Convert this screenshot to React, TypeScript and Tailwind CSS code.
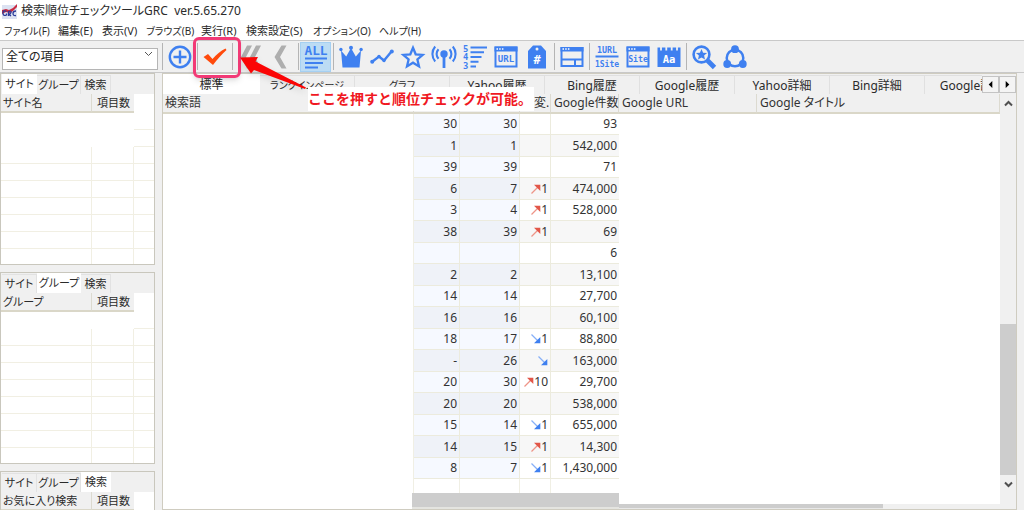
import React from 'react';

const BLUE = '#3f80f0';

const menus: [string, string][] = [
  ['ファイル(F)', 'w-[54px] text-[10px]'],
  ['編集(E)', 'w-[44px] text-[11px]'],
  ['表示(V)', 'w-[44px] text-[11px]'],
  ['ブラウズ(B)', 'w-[55px] text-[10px]'],
  ['実行(R)', 'w-[45px] text-[11px]'],
  ['検索設定(S)', 'w-[67px] text-[11px]'],
  ['オプション(O)', 'w-[66px] text-[10px]'],
  ['ヘルプ(H)', 'w-[60px] text-[10px]'],
];

function Icon({ children }: { children: React.ReactNode }) {
  return (
    <svg className="h-6 w-6 shrink-0 overflow-visible" viewBox="0 0 24 24" fill="none" stroke={BLUE} strokeWidth="2.4">
      {children}
    </svg>
  );
}

function Glyphs({ x, y, size, fill = BLUE, children }: { x: number; y: number; size: number; fill?: string; children: string }) {
  return (
    <text x={x} y={y} fontSize={size} fill={fill} stroke="none" fontWeight="700" textAnchor="middle" fontFamily="'DejaVu Sans Mono', 'Liberation Mono', monospace">
      {children}
    </text>
  );
}

function Tool({ label, active, children }: { label: string; active?: boolean; children: React.ReactNode }) {
  return (
    <button
      type="button"
      aria-label={label}
      className={active ? 'flex h-[30px] w-[31px] shrink-0 items-center justify-center border border-[#a5d0f2] bg-[#bcdcf4]' : 'flex h-[30px] w-[31px] shrink-0 items-center justify-center'}
    >
      <Icon>{children}</Icon>
    </button>
  );
}

function Sep() {
  return (
    <span className="flex w-1 shrink-0 justify-center self-stretch py-0.5">
      <span className="w-px bg-[#b4b4b4]" />
    </span>
  );
}

function Toolbar() {
  return (
    <div className="flex h-[33px] shrink-0 items-center border-y border-[#c9c9c9] bg-[#f0f0f0]">
      <div className="flex w-[160px] shrink-0 items-start self-stretch pt-0.5 pl-0.5">
        <div className="relative w-[156px]">
          <select aria-label="項目" className="h-[22px] w-full appearance-none border border-[#b5b5b5] bg-white pb-[3px] pl-[3px] text-xs leading-4 text-[#222]" defaultValue="all">
            <option value="all">全ての項目</option>
          </select>
          <svg className="pointer-events-none absolute top-[8px] right-[5px] h-[6px] w-[9px]" viewBox="0 0 9 6" fill="none" stroke="#555" strokeWidth="1">
            <path d="M1 1l3.5 3.5L8 1" />
          </svg>
        </div>
      </div>
      <Sep />
      <Tool label="追加">
        <circle cx="12" cy="12" r="10.2" />
        <path d="M12 5.5v13M5.5 12h13" />
      </Tool>
      <Sep />
      <Tool label="順位チェック">
        <path d="M.5 12l4.500-3 4.500 5C13.500 9.500 17.500 6 22.500 3.500l1 1.500C18.500 9.500 14 14.500 10 20z" fill="#ff4a0c" stroke="none" />
      </Tool>
      <Sep />
      <Tool label="最初へ">
        <path d="M9 .5h5L8 12l6 11.500H9L3 12zM18 .5h5L17 12l6 11.500h-5L12 12z" fill="#aeaeae" stroke="none" />
      </Tool>
      <Tool label="前へ">
        <path d="M12.500 .5h5L11 12l6.500 11.500h-5L5.500 12z" fill="#aeaeae" stroke="none" />
      </Tool>
      <Sep />
      <Tool label="全て" active>
        <Glyphs x={12} y={9.5} size={12.8}>ALL</Glyphs>
        <path d="M1 13.500h22M1 18h18M1 22.500h13" strokeWidth="1.900" />
      </Tool>
      <Sep />
      <Tool label="王冠">
        <path d="M2 5.500l5.200 6L12 3l4.800 8.500 5.200-6-1.500 17h-17z" fill={BLUE} stroke="none" />
        <circle cx="1.900" cy="4.500" r="1.700" fill={BLUE} stroke="none" />
        <circle cx="12" cy="2.800" r="2" fill={BLUE} stroke="none" />
        <circle cx="22.100" cy="4.500" r="1.700" fill={BLUE} stroke="none" />
      </Tool>
      <Tool label="推移">
        <path d="M2.500 16.500L9 11.500l5 4 7.500-9" />
        <circle cx="2.200" cy="16.800" r="2" fill={BLUE} stroke="none" />
        <circle cx="9" cy="11.500" r="1.700" fill={BLUE} stroke="none" />
        <circle cx="14" cy="15.500" r="1.700" fill={BLUE} stroke="none" />
        <circle cx="21.800" cy="6.500" r="2" fill={BLUE} stroke="none" />
      </Tool>
      <Tool label="お気に入り">
        <path d="M12 2.800l2.700 6.500 7 .6-5.300 4.600 1.600 6.900-6-3.700-6 3.700 1.600-6.900L2.300 9.900l7-.6z" strokeWidth="2.300" />
      </Tool>
      <Tool label="電波">
        <circle cx="12" cy="9" r="3.700" fill={BLUE} stroke="none" />
        <path d="M12 10v13" strokeWidth="2.800" />
        <path d="M6.500 4.200a7 7 0 0 0 0 9.600M17.500 4.200a7 7 0 0 1 0 9.600M3.200 1.500a11.500 11.500 0 0 0 0 15M20.800 1.500a11.500 11.500 0 0 1 0 15" strokeWidth="2.100" />
      </Tool>
      <Tool label="順位順">
        <Glyphs x={2.6} y={6.8} size={8.8}>5</Glyphs>
        <Glyphs x={2.6} y={15.3} size={8.8}>4</Glyphs>
        <Glyphs x={2.6} y={23.8} size={8.8}>3</Glyphs>
        <path d="M7.500 2.500H24M7.500 7.200h13.500M7.500 12h11M7.500 16.700h8M7.500 21.500h5.500" strokeWidth="2" />
      </Tool>
      <Tool label="URL">
        <path d="M1.500 2.500h21v19h-21z" strokeWidth="2" />
        <path d="M.5 1.500h23v5H.5z" fill={BLUE} stroke="none" />
        <path d="M2.500 4h7" stroke="#fff" strokeWidth="1.400" strokeDasharray="1.500 1.200" />
        <Glyphs x={12} y={16.8} size={9}>URL</Glyphs>
      </Tool>
      <Tool label="タグ">
        <path d="M8 .5h8l5 5.500v17.500H3V6z" fill={BLUE} stroke="none" />
        <circle cx="12" cy="4" r="1.500" fill="#f0f0f0" stroke="none" />
        <Glyphs x={12} y={19} size={12} fill="#fff">#</Glyphs>
      </Tool>
      <Sep />
      <Tool label="画面分割">
        <path d="M1.500 3h21v18h-21z" strokeWidth="2" />
        <path d="M.5 2h23v4.500H.5z" fill={BLUE} stroke="none" />
        <path d="M2.500 4h7" stroke="#fff" strokeWidth="1.400" strokeDasharray="1.500 1.200" />
        <path d="M1 14.500h22M15 14.500V21" strokeWidth="2" />
      </Tool>
      <Sep />
      <Tool label="1URL 1Site">
        <Glyphs x={12} y={7.6} size={8.4}>1URL</Glyphs>
        <path d="M.5 11.500h23" strokeWidth="2" />
        <Glyphs x={12} y={21.5} size={8}>1Site</Glyphs>
      </Tool>
      <Tool label="サイト">
        <path d="M1.500 2.500h21v19h-21z" strokeWidth="2" />
        <path d="M.5 1.500h23v5H.5z" fill={BLUE} stroke="none" />
        <path d="M2.500 4h7" stroke="#fff" strokeWidth="1.400" strokeDasharray="1.500 1.200" />
        <Glyphs x={12} y={16.8} size={8.2}>Site</Glyphs>
      </Tool>
      <Tool label="文字">
        <path d="M.5 2.500h23v19.500H.5z" fill={BLUE} stroke="none" />
        <path d="M4 1.500v4M9.300 1.500v4M14.700 1.500v4M20 1.500v4" stroke="#f0f0f0" strokeWidth="1.800" />
        <Glyphs x={12} y={17.5} size={10.5} fill="#fff">Aa</Glyphs>
      </Tool>
      <Sep />
      <Tool label="検索">
        <circle cx="9.500" cy="9.500" r="7.900" strokeWidth="2.600" />
        <path d="M15.500 15.500l7 7" strokeWidth="4.800" />
        <path d="M9.500 4l1.600 3.700 4 .3-3 2.600.9 3.900-3.500-2.100-3.500 2.100.9-3.900-3-2.600 4-.3z" fill={BLUE} stroke="none" />
      </Tool>
      <Tool label="共有">
        <circle cx="12" cy="13" r="8.300" strokeWidth="2.500" />
        <g fill={BLUE} stroke="none">
          <circle cx="12" cy="4.200" r="3.900" />
          <circle cx="4.200" cy="19" r="3.900" />
          <circle cx="19.800" cy="19" r="3.900" />
        </g>
      </Tool>
    </div>
  );
}

const sideTabs = [
  { label: 'サイト', width: 'w-[35px]' },
  { label: 'グループ', width: 'w-[44px]' },
  { label: '検索', width: 'w-[30px]' },
];

function SidePanel({ active, title, blankRows, rows }: { active: number; title: string; blankRows: number; rows: number }) {
  return (
    <section className="shrink-0 border border-[#c9c7bd] bg-white">
      <div role="tablist" className="flex h-[20px] items-end bg-[#f0f0f0] pl-px">
        {sideTabs.map((t, i) => (
          <button
            key={t.label}
            type="button"
            role="tab"
            aria-selected={i === active}
            className={`${t.width} shrink-0 whitespace-nowrap text-center text-[11px] leading-[18px] ${i === active ? 'h-[20px] bg-white' : 'h-[19px] border-t border-r border-[#e2e2e2] bg-[#f0f0f0]'}`}
          >
            {t.label}
          </button>
        ))}
      </div>
      <table className="w-full table-fixed border-separate border-spacing-0 text-[11px]">
        <colgroup>
          <col className="w-[91px]" />
          <col className="w-[42px]" />
          <col />
        </colgroup>
        <thead>
          <tr className="h-[19px] text-left leading-4">
            <th className="border-r border-b-2 border-r-[#dcdad0] border-b-[#dad7c8] bg-[#f0f0f0] pl-[2px] font-normal whitespace-nowrap">{title}</th>
            <th className="border-b-2 border-[#dad7c8] bg-[#f0f0f0] pl-[5px] font-normal whitespace-nowrap">項目数</th>
            <td />
          </tr>
        </thead>
        <tbody>
          {Array.from({ length: rows }, (_, i) => {
            const blank = i < blankRows;
            const last = i === rows - 1;
            const line = blank ? '' : last ? 'border-r border-[#f1efe3]' : 'border-r border-b border-[#f1efe3]';
            return (
              <tr key={i} className={last ? 'h-[15px]' : 'h-[17px]'}>
                <td className={line} />
                <td className={line} />
                <td className={last ? '' : 'border-b border-[#f1efe3]'} />
              </tr>
            );
          })}
        </tbody>
      </table>
    </section>
  );
}

type Row = [string, string, string, string];
const data: Row[] = [
  ['30', '30', '', '93'],
  ['1', '1', '', '542,000'],
  ['39', '39', '', '71'],
  ['6', '7', 'u1', '474,000'],
  ['3', '4', 'u1', '528,000'],
  ['38', '39', 'u1', '69'],
  ['', '', '', '6'],
  ['2', '2', '', '13,100'],
  ['14', '14', '', '27,700'],
  ['16', '16', '', '60,100'],
  ['18', '17', 'd1', '88,800'],
  ['-', '26', 'd', '163,000'],
  ['20', '30', 'u10', '29,700'],
  ['20', '20', '', '538,000'],
  ['15', '14', 'd1', '655,000'],
  ['14', '15', 'u1', '14,300'],
  ['8', '7', 'd1', '1,430,000'],
];

function Change({ value }: { value: string }) {
  if (!value) return null;
  const up = value[0] === 'u';
  return (
    <span className="flex items-center justify-end">
      <svg className="h-[10px] w-[10px] shrink-0" viewBox="0 0 10 10">
        {up ? (
          <>
            <path d="M.5 9.500L7 3" stroke="#ee9488" strokeWidth="1.300" />
            <path d="M3 .8H9.300V7z" fill="#e25648" />
          </>
        ) : (
          <>
            <path d="M.5 .5L7 7" stroke="#86b0f7" strokeWidth="1.300" />
            <path d="M9.300 3V9.200H3z" fill="#3f80f0" />
          </>
        )}
      </svg>
      {value.slice(1)}
    </span>
  );
}

const mainTabs = [
  { label: '標準', size: 'text-[12px]' },
  { label: 'ランクインページ', size: 'text-[10px]' },
  { label: 'グラフ', size: 'text-[10px]' },
  { label: 'Yahoo履歴', size: 'text-[12px]' },
  { label: 'Bing履歴', size: 'text-[12px]' },
  { label: 'Google履歴', size: 'text-[12px]' },
  { label: 'Yahoo詳細', size: 'text-[12px]' },
  { label: 'Bing詳細', size: 'text-[12px]' },
  { label: 'Google詳細', size: 'text-[12px]' },
];

function Chevron({ d }: { d: string }) {
  return (
    <svg className="h-[7px] w-[9px]" viewBox="0 0 9 7" fill="none" stroke="#505050" strokeWidth="2">
      <path d={d} />
    </svg>
  );
}

function ResultPanel() {
  const head = 'border-r border-b-2 border-r-[#dcdad0] border-b-[#dad7c8] bg-[#f0f0f0] pr-[2px] text-left font-normal whitespace-nowrap';
  return (
    <section className="flex min-w-0 flex-1 flex-col border border-[#cfccc0] bg-white">
      <div className="flex h-[20px] shrink-0 items-end bg-[#f0f0f0]">
        <div role="tablist" className="flex min-w-0 flex-1 items-end overflow-hidden">
          {mainTabs.map(({ label, size }, i) => (
            <button
              key={label}
              type="button"
              role="tab"
              aria-selected={i === 0}
              className={`shrink-0 whitespace-nowrap text-center leading-[17px] ${size} ${i === 0 ? 'h-[20px] w-[97px] bg-white' : 'h-[19px] w-[95px] border-t border-r border-[#e0e0e0]'}`}
            >
              {label}
            </button>
          ))}
        </div>
        <div className="flex shrink-0 self-start pt-[2px]">
          {['M7 1v8L3 5z', 'M3 1v8l4-4z'].map((d, i) => (
            <button key={d} type="button" aria-label={i ? '右のタブ' : '左のタブ'} className="flex h-[17px] w-[17px] items-center justify-center border border-[#c4c4c4] bg-[#f4f4f4]">
              <svg className="h-[9px] w-[9px]" viewBox="0 0 10 10">
                <path d={d} fill="#000" />
              </svg>
            </button>
          ))}
        </div>
      </div>
      <div className="flex min-h-0 flex-1">
        <div className="flex min-w-0 flex-1 flex-col">
          <div className="min-h-0 flex-1 overflow-hidden">
            <table className="w-full table-fixed border-separate border-spacing-0 text-xs text-[#333]">
              <colgroup>
                <col className="w-[251px]" />
                <col className="w-[46px]" />
                <col className="w-[60px]" />
                <col className="w-[31px]" />
                <col className="w-[68px]" />
                <col className="w-[138px]" />
                <col />
              </colgroup>
              <thead>
                <tr className="h-[20px] leading-4">
                  <th className={`${head} pl-[2px]`}>検索語</th>
                  <th className={head} />
                  <th className={head} />
                  <th className={`${head} pl-[14px]`}>変.</th>
                  <th className={`${head} pl-[3px]`}>Google件数</th>
                  <th className={`${head} pl-[3px]`}>Google URL</th>
                  <th className={`${head} pl-[3px]`}>Google タイトル</th>
                </tr>
              </thead>
              <tbody>
                {data.map((r, i) => {
                  const even = i % 2 === 1;
                  const line = 'border-r border-b border-[#ecebdd] py-0 text-right';
                  const rank = even ? 'bg-[#eff2f8]' : 'bg-[#f6f9ff]';
                  const plain = even ? 'bg-[#f7f7f7]' : 'bg-white';
                  return (
                    <tr key={i} className={even ? 'h-[22px] leading-5' : 'h-[21px] leading-5'}>
                      <td className="border-r border-[#f0efe4]" />
                      <td className={`${line} ${rank} pr-[2px]`}>{r[0]}</td>
                      <td className={`${line} ${rank} pr-[2px]`}>{r[1]}</td>
                      <td className={`${line} ${plain} pr-[2px]`}><Change value={r[2]} /></td>
                      <td className={`border-b border-[#ecebdd] py-0 pr-[2px] text-right ${plain}`}>{r[3]}</td>
                      <td />
                      <td />
                    </tr>
                  );
                })}
                <tr className="h-[14px]">
                  <td className="border-r border-[#f0efe4]" />
                  <td className="border-r border-[#f0efe4]" />
                  <td className="border-r border-[#f0efe4]" />
                  <td className="border-r border-[#f0efe4]" />
                  <td />
                  <td />
                  <td />
                </tr>
              </tbody>
            </table>
          </div>
          <div className="flex h-[16px] shrink-0 items-end">
            <span className="w-[249px] shrink-0" />
            <span className="h-[16px] w-[207px] shrink-0 border-b-2 border-[#e4e4e0] bg-[#cdcdcd]" />
            <span className="h-[5px] w-[264px] shrink-0 border-b border-[#e8e8e8] bg-[#cdcdcd]" />
            <span className="h-[5px] flex-1 bg-[#f0f0f0]" />
          </div>
        </div>
        <div className="flex w-[16px] shrink-0 flex-col bg-[#f0f0f0]">
          <button type="button" aria-label="上へ" className="flex h-[18px] shrink-0 items-center justify-center">
            <Chevron d="M1 5.500L4.500 2 8 5.500" />
          </button>
          <span className="flex-1" />
          <span className="h-[151px] shrink-0 bg-[#cdcdcd]" />
          <button type="button" aria-label="下へ" className="flex h-[18px] shrink-0 items-center justify-center">
            <Chevron d="M1 1.500L4.500 5 8 1.500" />
          </button>
          <span className="h-[16px] shrink-0" />
        </div>
      </div>
    </section>
  );
}

export default function App() {
  return (
    <div className="relative flex h-screen flex-col overflow-hidden bg-[#f0f0f0] font-['Noto_Sans','Noto_Sans_CJK_JP',sans-serif] text-[#2b2b2b] [font-feature-settings:'palt']">
      <header className="flex h-[22px] shrink-0 items-center gap-1 bg-white pl-0.5">
        <svg className="h-4 w-[15px]" viewBox="0 0 15 16">
          <path d="M0 2h15v14H0z" fill="#dce2f2" />
          <path d="M0 7l4-1 3 1 4-2 4-4v3l-4 4-3 2-4-1-4 2z" fill="#c92a40" />
          <path d="M4.500 8.500Q1 6.500 1 10t3.500 2V10.500M6.500 13V8.500q3-1 2.500 1T6.500 11L9 13M14 8q-3 0-3 2.500t3 2" fill="none" stroke="#2c3c9a" strokeWidth="1.300" />
        </svg>
        <h1 className="text-xs whitespace-pre">検索順位チェックツールGRC  ver.5.65.270</h1>
      </header>
      <nav className="flex h-[18px] shrink-0 bg-white pl-1 leading-[18px]">
        {menus.map(([label, width]) => (
          <button key={label} type="button" className={`${width} shrink-0 whitespace-nowrap text-left leading-[18px]`}>
            {label}
          </button>
        ))}
      </nav>
      <Toolbar />
      <main className="flex min-h-0 flex-1 gap-[7px] pr-[7px]">
        <aside className="flex w-[155px] shrink-0 flex-col gap-[7px] overflow-hidden">
          <SidePanel active={0} title="サイト名" blankRows={2} rows={9} />
          <SidePanel active={1} title="グループ" blankRows={1} rows={9} />
          <SidePanel active={2} title="お気に入り検索" blankRows={0} rows={2} />
        </aside>
        <ResultPanel />
      </main>

      <div className="pointer-events-none absolute top-[37px] left-[193px] h-[41px] w-[48px] rounded-md border-3 border-[#f23a76] shadow-md" />
      <p className="absolute top-[87px] left-[308px] h-[24px] w-[226px] bg-white text-sm leading-6 font-bold whitespace-nowrap text-[#f01822] [font-feature-settings:normal]">ここを押すと順位チェックが可能。</p>
      <svg className="pointer-events-none absolute top-[52px] left-[236px] h-[44px] w-[76px] drop-shadow-md" viewBox="0 0 76 44">
        <path d="M4 5.500L22 5l-2.500 4.500L70 35.500l-1 1.500-51-19-3 3.500z" fill="#fb0505" />
      </svg>
    </div>
  );
}
